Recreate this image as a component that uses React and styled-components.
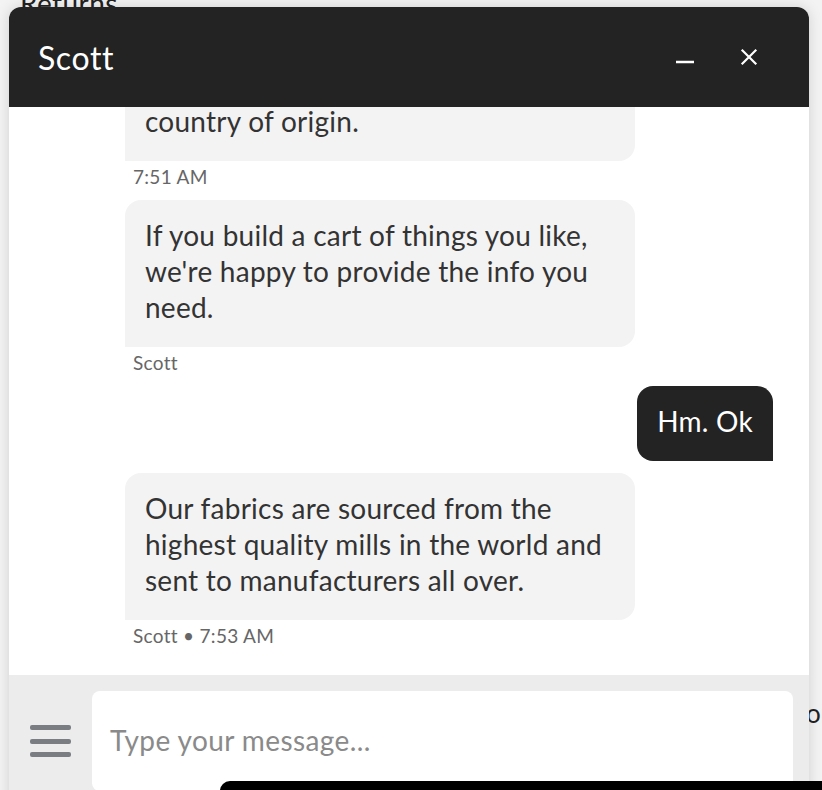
import React from "react";
import styled, { createGlobalStyle } from "styled-components";

const GlobalStyle = createGlobalStyle`
  html, body {
    margin: 0;
    padding: 0;
    height: 100%;
    overflow: hidden;
    background: #f3f3f3;
    font-family: Lato, "Open Sans", sans-serif;
  }
`;

const messages = [
  { from: "agent", text: "country of origin.", meta: "7:51 AM" },
  {
    from: "agent",
    text: "If you build a cart of things you like, we're happy to provide the info you need.",
    meta: "Scott",
  },
  { from: "user", text: "Hm. Ok" },
  {
    from: "agent",
    text: "Our fabrics are sourced from the highest quality mills in the world and sent to manufacturers all over.",
    meta: "Scott • 7:53 AM",
  },
];

function App() {
  return (
    <Page>
      <GlobalStyle />
      <PageHeading>Returns</PageHeading>
      <PageLine>or</PageLine>

      <ChatWindow>
        <Header>
          <Title>Scott</Title>
          <HeaderActions>
            <IconButton aria-label="minimize">
              <svg width="20" height="20" viewBox="0 0 20 20">
                <line x1="1" y1="15" x2="19" y2="15" stroke="#fff" strokeWidth="2.4" />
              </svg>
            </IconButton>
            <IconButton aria-label="close">
              <svg width="20" height="20" viewBox="0 0 20 20">
                <path d="M3.5 3.5 L16.5 16.5 M16.5 3.5 L3.5 16.5" stroke="#fff" strokeWidth="2.2" strokeLinecap="square" />
              </svg>
            </IconButton>
          </HeaderActions>
        </Header>

        <Messages>
          {messages.map((m, i) => (
            <Message key={i} mine={m.from === "user"}>
              <Bubble mine={m.from === "user"}>{m.text}</Bubble>
              {m.meta && <Meta>{m.meta}</Meta>}
            </Message>
          ))}
        </Messages>

        <Composer>
          <MenuIcon aria-label="menu">
            <span />
            <span />
            <span />
          </MenuIcon>
          <Input placeholder="Type your message..." />
        </Composer>
      </ChatWindow>

      <BottomBar />
    </Page>
  );
}

export default App;

const Page = styled.div`
  position: relative;
  height: 790px;
  overflow: hidden;
  display: flex;
  flex-direction: column;
  color: #222;
`;

const PageHeading = styled.h2`
  margin: -13px 0 0 20px;
  font-size: 28px;
  font-weight: 400;
  line-height: 32px;
  letter-spacing: 0.4px;
`;

const PageLine = styled.p`
  margin: 678px 0 0 0;
  padding-left: 806px;
  white-space: nowrap;
  font-size: 26px;
  line-height: 32px;
`;

const ChatWindow = styled.section`
  position: absolute;
  top: 7px;
  left: 9px;
  width: 800px;
  height: 800px;
  display: flex;
  flex-direction: column;
  background: #fff;
  border-radius: 12px 12px 0 0;
  overflow: hidden;
  box-shadow: 0 0 14px rgba(0, 0, 0, 0.14);
`;

const Header = styled.header`
  flex: none;
  height: 100px;
  display: flex;
  align-items: center;
  justify-content: space-between;
  padding: 0 50px 0 29px;
  box-sizing: border-box;
  background: #232323;
`;

const Title = styled.h1`
  margin: 0;
  font-size: 32px;
  font-weight: 400;
  color: #fff;
  letter-spacing: 0.6px;
`;

const HeaderActions = styled.div`
  display: flex;
  align-items: center;
  gap: 44px;
`;

const IconButton = styled.button`
  border: 0;
  padding: 0;
  background: none;
  width: 20px;
  height: 20px;
  display: flex;
  cursor: pointer;
`;

const Messages = styled.div`
  flex: 1;
  min-height: 0;
  overflow: hidden;
  display: flex;
  flex-direction: column;
  justify-content: flex-end;
  gap: 12px;
  padding: 0 36px 28px 116px;
`;

const Message = styled.div`
  flex: none;
  display: flex;
  flex-direction: column;
  align-items: ${(p) => (p.mine ? "flex-end" : "flex-start")};
`;

const Bubble = styled.div`
  box-sizing: border-box;
  max-width: 510px;
  width: ${(p) => (p.mine ? "auto" : "510px")};
  padding: 17px 20px 22px;
  font-size: 28px;
  line-height: 36px;
  letter-spacing: 0.25px;
  color: ${(p) => (p.mine ? "#fff" : "#333")};
  background: ${(p) => (p.mine ? "#232323" : "#f3f3f3")};
  border-radius: ${(p) => (p.mine ? "16px 16px 0 16px" : "16px 16px 16px 0")};
`;

const Meta = styled.div`
  margin: 4px 0 0 8px;
  font-size: 19px;
  line-height: 23px;
  letter-spacing: 0.3px;
  color: #666;
`;

const Composer = styled.div`
  flex: none;
  display: flex;
  align-items: center;
  gap: 21px;
  padding: 16px 16px 16px 21px;
  background: #ececec;
`;

const MenuIcon = styled.div`
  width: 41px;
  display: flex;
  flex-direction: column;
  gap: 8.5px;

  span {
    display: block;
    height: 5px;
    border-radius: 2px;
    background: #7a7e82;
  }
`;

const Input = styled.textarea`
  flex: 1;
  height: 100px;
  box-sizing: border-box;
  border: 0;
  border-radius: 8px;
  padding: 31px 18px;
  resize: none;
  outline: none;
  background: #fff;
  font-family: Lato, "Open Sans", sans-serif;
  font-size: 28px;
  line-height: 36px;
  letter-spacing: 0.4px;
  color: #333;

  &::placeholder {
    color: #8a8a8a;
  }
`;

const BottomBar = styled.div`
  position: absolute;
  left: 220px;
  right: 0;
  top: 781px;
  height: 20px;
  border-radius: 10px 0 0 0;
  background: #000;
`;
